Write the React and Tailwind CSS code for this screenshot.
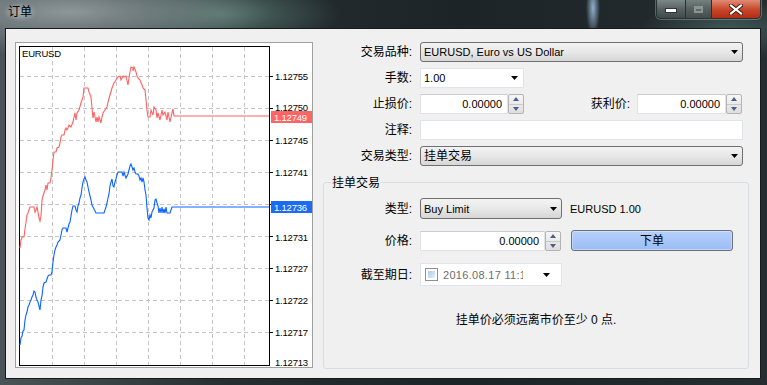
import React from 'react';

const red =
  "20,248 21,240 22,237 24,237 25,229 27,215 28,213 30,207 34,207 35,212 36,210 37,207 38,212 39,218 40,221 41,216 42,200 43,196 45,190 46,185 47,190 48,183 50,183 51,178 52,170 53,160 54,152 56,152 57,148 59,147 60,143 61,137 62,135 64,135 65,130 66,128 67,130 68,128 69,125 71,127 73,122 74,117 75,113 76,120 77,113 79,110 81,103 83,97 84,88 88,88 89,92 91,97 92,108 93,118 94,112 96,122 97,117 98,122 99,117 101,123 102,117 103,113 105,110 107,107 108,102 110,95 112,88 114,83 116,80 118,77 120,76 121,80 123,76 124,77 126,76 128,85 129,78 130,72 131,67 133,68 133,71 134,67 136,72 137,76 138,78 140,80 142,85 143,88 145,90 146,100 147,110 148,117 150,117 151,110 153,115 154,107 156,110 157,118 158,113 160,120 162,110 163,115 165,112 167,120 168,112 170,122 172,113 173,109 174,116 269,116";

const blue =
  "20,345 21,338 22,336 23,331 24,330 25,320 26,315 27,312 28,307 29,305 30,302 31,300 32,297 33,295 34,291 35,292 36,297 37,300 38,302 39,306 40,310 41,300 42,296 43,287 44,283 46,282 47,279 48,276 49,275 51,275 52,272 53,262 54,255 55,250 56,247 57,245 58,242 60,240 61,235 62,230 63,228 66,228 67,232 68,228 69,224 70,222 71,216 72,210 73,206 75,206 76,210 77,212 78,206 79,203 80,198 81,195 82,188 83,182 84,179 85,177 86,180 87,182 88,187 89,192 90,196 91,200 92,205 93,207 95,211 96,213 104,213 105,210 106,207 107,203 108,198 109,194 110,186 111,182 112,179 113,186 114,187 115,182 116,179 117,175 118,172 122,172 123,176 124,172 125,175 126,178 128,174 129,170 130,166 131,164 132,167 133,170 134,168 135,172 136,174 138,174 139,176 140,180 141,178 142,182 143,178 144,182 145,190 146,195 147,208 148,218 149,220 150,215 151,218 152,212 154,208 155,200 156,199 157,203 158,206 159,213 160,208 161,213 162,207 163,213 164,209 165,213 166,207 167,213 170,213 171,210 172,207 269,207";

const gridX = [52, 84, 116, 148, 180, 212, 244];
const gridY = [76, 108, 140, 172, 204, 236, 268, 300, 332];
const labels = [
  [76, '1.12755'],
  [107, '1.12750'],
  [140, '1.12745'],
  [172, '1.12741'],
  [237, '1.12731'],
  [268, '1.12727'],
  [300, '1.12722'],
  [332, '1.12717'],
  [362, '1.12713'],
];

function Chart() {
  const txt = { fontFamily: 'Liberation Sans, sans-serif', fontSize: '9.5px', letterSpacing: '-0.2px' };
  return (
    <div className="w-[298px] h-[326px] border border-[#a0a0a0] bg-white">
      <svg width="296" height="324" viewBox="16 43 296 324" shapeRendering="crispEdges">
        {gridX.map((x) => (
          <line key={x} x1={x + 0.5} y1="47" x2={x + 0.5} y2="365" stroke="#c4c4c4" strokeDasharray="4 3" />
        ))}
        {gridY.map((y) => (
          <g key={y}>
            <line x1="20" y1={y + 0.5} x2="269" y2={y + 0.5} stroke="#c4c4c4" strokeDasharray="4 3" />
            <line x1="269" y1={y + 0.5} x2="273" y2={y + 0.5} stroke="#000" />
          </g>
        ))}
        <rect x="19.5" y="46.5" width="250" height="319" fill="none" stroke="#000" />
        <text x="22" y="57" style={txt} fill="#000">EURUSD</text>
        {labels.map(([y, t]) => (
          <text key={t} x="275" y={y + 3.5} style={txt} fill="#000">{t}</text>
        ))}
        <polyline points={red} fill="none" stroke="#ff6161" strokeWidth="1.1" shapeRendering="auto" />
        <polyline points={blue} fill="none" stroke="#0a64ff" strokeWidth="1.1" shapeRendering="auto" />
        <rect x="271" y="111" width="41" height="12" fill="#ff6464" />
        <text x="274" y="120.5" style={txt} fill="#fff">1.12749</text>
        <rect x="271" y="201" width="41" height="12" fill="#1a6cf5" />
        <text x="274" y="210.5" style={txt} fill="#fff">1.12736</text>
      </svg>
    </div>
  );
}

function Arrow() {
  return (
    <svg width="7" height="4" viewBox="0 0 7 4" className="shrink-0">
      <path d="M0 0h7L3.5 4z" fill="#000" />
    </svg>
  );
}

function Spinner() {
  return (
    <div className="w-[16px] h-full flex flex-col border border-[#b4b4b4] rounded-[2px] bg-gradient-to-b from-[#f6f6f6] to-[#dedede]">
      <div className="flex-1 flex items-center justify-center border-b border-[#c8c8c8]">
        <svg width="6" height="4" viewBox="0 0 6 4"><path d="M0 4L3 0l3 4z" fill="#4b6086" /></svg>
      </div>
      <div className="flex-1 flex items-center justify-center">
        <svg width="6" height="4" viewBox="0 0 6 4"><path d="M0 0h6L3 4z" fill="#4b6086" /></svg>
      </div>
    </div>
  );
}

function Select({ w, children }) {
  return (
    <div
      className={`${w} h-full flex items-center justify-between pl-[3px] pr-[4px] rounded-[3px] border border-[#707070] bg-gradient-to-b from-[#f3f3f3] via-[#e8e8e8] to-[#d6d6d6]`}
    >
      <span>{children}</span>
      <Arrow />
    </div>
  );
}

function NumBox({ w, spin }) {
  return (
    <div className={`${w} h-full flex`}>
      <div className="flex-1 h-full bg-white border border-[#e0e4ea] border-t-[#c9ccd2] flex items-center justify-end pr-[5px]">
        0.00000
      </div>
      <div className={`${spin} h-full`}>
        <Spinner />
      </div>
    </div>
  );
}

function Label({ w, children }) {
  return <div className={`${w} text-right text-[12px] leading-[16px] shrink-0`}>{children}</div>;
}

function TitleButtons() {
  return (
    <div className="ml-auto mr-[6px] h-[19px] flex rounded-b-[5px] border border-t-0 border-[#2a3133] overflow-hidden shadow-[0_0_0_1px_rgba(200,210,210,0.35)]">
      <div className="w-[29px] h-full flex items-end justify-center pb-[5px] border-r border-[#2a3133] bg-gradient-to-b from-[#7b8789] via-[#566264] to-[#3e4a4c]">
        <div className="w-[10px] h-[3px] bg-white border border-[#333] box-content" />
      </div>
      <div className="w-[26px] h-full flex items-center justify-center border-r border-[#2a3133] bg-gradient-to-b from-[#75817f] via-[#55605f] to-[#414c4b]">
        <div className="w-[9px] h-[7px] border-2 border-t-[3px] border-[#8a9494] bg-[#5f6a69]" />
      </div>
      <div className="w-[48px] h-full flex items-center justify-center bg-gradient-to-b from-[#e08a74] via-[#c8492c] to-[#b32c12]">
        <svg width="14" height="11" viewBox="0 0 14 11">
          <path d="M2 1.5L12 9.5M12 1.5L2 9.5" stroke="#3a1a12" strokeWidth="4" strokeLinecap="square" />
          <path d="M2 1.5L12 9.5M12 1.5L2 9.5" stroke="#fff" strokeWidth="2.2" strokeLinecap="square" />
        </svg>
      </div>
    </div>
  );
}

export default function App() {
  return (
    <div className="w-[767px] h-[385px] overflow-hidden text-black text-[11px] leading-[14px] font-['Liberation_Sans','Noto_Sans_CJK_SC',sans-serif] bg-[radial-gradient(ellipse_200px_45px_at_70px_12px,#8d979a,transparent),radial-gradient(ellipse_120px_35px_at_220px_14px,#52726a,transparent),radial-gradient(ellipse_7px_28px_at_593px_8px,#8fb0cc,transparent),radial-gradient(ellipse_90px_30px_at_730px_30px,#3f5856,transparent),linear-gradient(90deg,#4a5457,#262e31_30%,#1d2427_60%,#252d30)]">
      {/* title bar */}
      <div className="h-[28px] flex items-start">
        <div className="ml-[4px] mt-[3px] px-[4px] py-[1px] text-[12px] leading-[16px] rounded-[8px] bg-[radial-gradient(ellipse_at_center,rgba(210,220,220,0.55),transparent_75%)]">
          订单
        </div>
        <TitleButtons />
      </div>

      {/* client area */}
      <div className="ml-[5px] w-[756px] h-[351px] border border-[#151a1c] bg-[#f0f0f0] flex pt-[13px] pl-[9px]">
        <Chart />

        <div className="ml-[10px] w-[426px] flex flex-col">
          <div className="h-[20px] flex items-center">
            <Label w="w-[89px]">交易品种:</Label>
            <div className="ml-[8px] h-full">
              <Select w="w-[323px]">EURUSD, Euro vs US Dollar</Select>
            </div>
          </div>

          <div className="mt-[6px] h-[20px] flex items-center">
            <Label w="w-[89px]">手数:</Label>
            <div className="ml-[8px] w-[104px] h-full bg-white border border-[#e0e4ea] flex items-center justify-between pl-[3px] pr-[5px]">
              <span>1.00</span>
              <Arrow />
            </div>
          </div>

          <div className="mt-[6px] h-[20px] flex items-center">
            <Label w="w-[89px]">止损价:</Label>
            <div className="ml-[8px] w-[323px] h-full flex items-center">
              <NumBox w="w-[104px]" spin="w-[16px]" />
              <div className="flex-1" />
              <Label w="">获利价:</Label>
              <div className="ml-[7px] h-full mr-[1px]">
                <NumBox w="w-[105px]" spin="w-[16px]" />
              </div>
            </div>
          </div>

          <div className="mt-[6px] h-[20px] flex items-center">
            <Label w="w-[89px]">注释:</Label>
            <div className="ml-[8px] w-[323px] h-full bg-white border border-[#e0e4ea]" />
          </div>

          <div className="mt-[6px] h-[20px] flex items-center">
            <Label w="w-[89px]">交易类型:</Label>
            <div className="ml-[8px] h-full text-[12px]">
              <Select w="w-[323px]">挂单交易</Select>
            </div>
          </div>

          {/* group box */}
          <div className="mt-[16px] h-[187px] border border-[#d5dfe5] rounded-[3px] flex flex-col">
            <div className="-mt-[7px] ml-[7px] w-fit px-[1px] bg-[#f0f0f0] text-[12px] leading-[14px]">挂单交易</div>

            <div className="mt-[8px] h-[21px] flex items-center">
              <Label w="w-[88px]">类型:</Label>
              <div className="ml-[8px] h-full">
                <Select w="w-[142px]">Buy Limit</Select>
              </div>
              <span className="ml-[8px]">EURUSD 1.00</span>
            </div>

            <div className="mt-[11px] h-[21px] flex items-center">
              <Label w="w-[88px]">价格:</Label>
              <div className="ml-[8px] h-[20px] mt-[1px]">
                <NumBox w="w-[142px]" spin="w-[17px]" />
              </div>
              <button className="ml-[9px] w-[162px] h-full rounded-[3px] border border-[#6b6f78] bg-gradient-to-b from-[#b6d0fb] to-[#9bbcf6] shadow-[inset_0_0_0_1px_rgba(255,255,255,0.35)] text-[12px] leading-[14px]">
                下单
              </button>
            </div>

            <div className="mt-[12px] h-[23px] flex items-center">
              <Label w="w-[88px]">截至期日:</Label>
              <div className="ml-[8px] w-[142px] h-full bg-white border border-[#e0e4ea] flex items-center pl-[4px] pr-[11px]">
                <div className="w-[13px] h-[13px] border border-[#8e8f8f] p-[2px] shrink-0">
                  <div className="w-full h-full bg-gradient-to-br from-[#aecbe6] to-[#e3eef8]" />
                </div>
                <div className="ml-[5px] w-[80px] overflow-hidden whitespace-nowrap text-[#6d6d6d] tracking-[0.3px]">2016.08.17 11:12</div>
                <div className="flex-1" />
                <Arrow />
              </div>
            </div>

            <div className="mt-[27px] text-center text-[12px] leading-[14px]">挂单价必须远离市价至少 0 点.</div>
          </div>
        </div>
      </div>
    </div>
  );
}
